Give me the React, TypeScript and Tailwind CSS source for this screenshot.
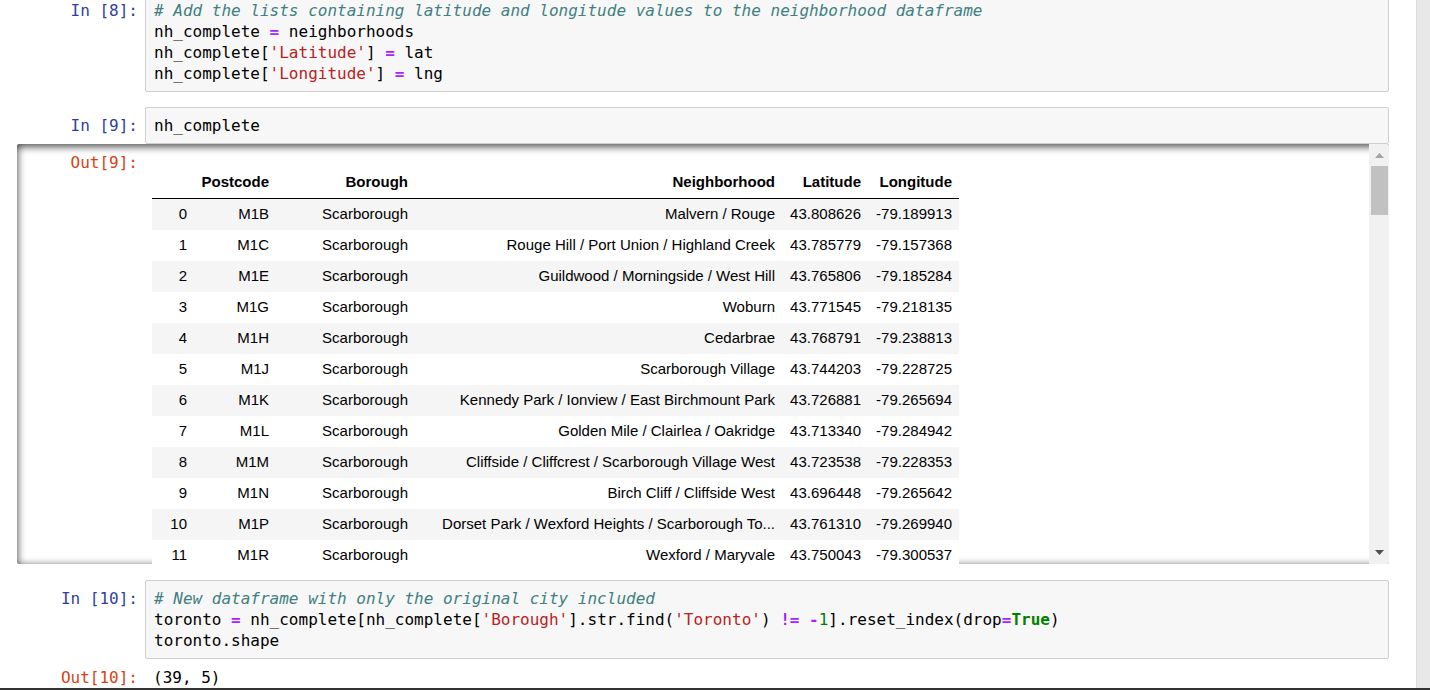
import React from 'react';

const mono = { fontFamily: '"DejaVu Sans Mono", "Liberation Mono", monospace' };

const rows: [string, string, string, string, string, string][] = [
    ['0', 'M1B', 'Scarborough', 'Malvern / Rouge', '43.808626', '-79.189913'],
    ['1', 'M1C', 'Scarborough', 'Rouge Hill / Port Union / Highland Creek', '43.785779', '-79.157368'],
    ['2', 'M1E', 'Scarborough', 'Guildwood / Morningside / West Hill', '43.765806', '-79.185284'],
    ['3', 'M1G', 'Scarborough', 'Woburn', '43.771545', '-79.218135'],
    ['4', 'M1H', 'Scarborough', 'Cedarbrae', '43.768791', '-79.238813'],
    ['5', 'M1J', 'Scarborough', 'Scarborough Village', '43.744203', '-79.228725'],
    ['6', 'M1K', 'Scarborough', 'Kennedy Park / Ionview / East Birchmount Park', '43.726881', '-79.265694'],
    ['7', 'M1L', 'Scarborough', 'Golden Mile / Clairlea / Oakridge', '43.713340', '-79.284942'],
    ['8', 'M1M', 'Scarborough', 'Cliffside / Cliffcrest / Scarborough Village West', '43.723538', '-79.228353'],
    ['9', 'M1N', 'Scarborough', 'Birch Cliff / Cliffside West', '43.696448', '-79.265642'],
    ['10', 'M1P', 'Scarborough', 'Dorset Park / Wexford Heights / Scarborough To...', '43.761310', '-79.269940'],
    ['11', 'M1R', 'Scarborough', 'Wexford / Maryvale', '43.750043', '-79.300537'],
];

const Op = ({ children }: { children: React.ReactNode }) => (
    <span className="font-bold text-[#aa22ff]">{children}</span>
);
const Str = ({ children }: { children: React.ReactNode }) => (
    <span className="text-[#ba2121]">{children}</span>
);
const Cmt = ({ children }: { children: React.ReactNode }) => (
    <span className="italic text-[#408080]">{children}</span>
);

const Prompt = ({ label, out = false }: { label: string; out?: boolean }) => (
    <div
        className={`w-[128px] shrink-0 pr-[7px] pt-[8px] text-right text-[16px] leading-[21px] whitespace-pre ${out ? 'text-[#d84315]' : 'text-[#303f9f]'}`}
        style={mono}
    >
        {label}
    </div>
);

const CodeCell = ({ label, children }: { label: string; children: React.ReactNode }) => (
    <div className="flex">
        <Prompt label={label} />
        <div
            className="flex-1 rounded-[2px] border border-[#cfcfcf] bg-[#f7f7f7] px-[8px] py-[7px] text-[16px] leading-[21px] text-black whitespace-pre"
            style={mono}
        >
            {children}
        </div>
    </div>
);

const Triangle = ({ up, color }: { up: boolean; color: string }) => (
    <svg width="9" height="5" viewBox="0 0 9 5">
        <polygon points={up ? '0,5 9,5 4.5,0' : '0,0 9,0 4.5,5'} fill={color} />
    </svg>
);

export default function App() {
    return (
        <div className="flex h-[690px] w-[1430px] flex-col overflow-hidden bg-white">
            <div className="flex min-h-0 flex-1">
                <div className="flex-1 overflow-hidden pl-[17px] pr-[27px]">
                    <div className="-mt-[8px] flex flex-col">
                        <CodeCell label="In [8]:">
                            <div><Cmt># Add the lists containing latitude and longitude values to the neighborhood dataframe</Cmt></div>
                            <div>nh_complete <Op>=</Op> neighborhoods</div>
                            <div>nh_complete[<Str>'Latitude'</Str>] <Op>=</Op> lat</div>
                            <div>nh_complete[<Str>'Longitude'</Str>] <Op>=</Op> lng</div>
                        </CodeCell>

                        <div className="mt-[15px]">
                            <CodeCell label="In [9]:">
                                <div>nh_complete</div>
                            </CodeCell>
                        </div>

                        {/* scrolled output area */}
                        <div className="flex h-[420px] overflow-hidden rounded-[2px] shadow-[inset_0_2px_8px_rgba(0,0,0,0.8)]">
                            <Prompt label="Out[9]:" out />
                            <div className="min-w-0 flex-1 overflow-hidden pl-[7px] pt-[23px]">
                                <table
                                    className="w-[807px] table-fixed border-separate border-spacing-0 text-[15px] text-black"
                                    style={{ fontFamily: '"Liberation Sans", Arial, sans-serif' }}
                                >
                                    <colgroup>
                                        <col className="w-[42px]" />
                                        <col className="w-[82px]" />
                                        <col className="w-[139px]" />
                                        <col className="w-[367px]" />
                                        <col className="w-[86px]" />
                                        <col className="w-[91px]" />
                                    </colgroup>
                                    <thead>
                                        <tr className="h-[32px]">
                                            <th className="border-b border-black px-[7px]"></th>
                                            <th className="border-b border-black px-[7px] text-right font-bold">Postcode</th>
                                            <th className="border-b border-black px-[7px] text-right font-bold">Borough</th>
                                            <th className="border-b border-black px-[7px] text-right font-bold">Neighborhood</th>
                                            <th className="border-b border-black px-[7px] text-right font-bold">Latitude</th>
                                            <th className="border-b border-black px-[7px] text-right font-bold">Longitude</th>
                                        </tr>
                                    </thead>
                                    <tbody>
                                        {rows.map((r, i) => (
                                            <tr key={r[0]} className={`h-[31px] ${i % 2 === 0 ? 'bg-[#f5f5f5]' : 'bg-white'}`}>
                                                {r.map((c, j) => (
                                                    <td key={j} className="overflow-hidden whitespace-nowrap px-[7px] text-right align-middle">
                                                        {c}
                                                    </td>
                                                ))}
                                            </tr>
                                        ))}
                                    </tbody>
                                </table>
                            </div>
                            {/* fake scrollbar */}
                            <div className="flex w-[20px] shrink-0 flex-col bg-[#f1f1f1]">
                                <div className="flex h-[20px] items-center justify-center pt-[3px]">
                                    <Triangle up color="#a3a3a3" />
                                </div>
                                <div className="ml-[2px] mr-[1px] mt-[2px] h-[49px] bg-[#c1c1c1]" />
                                <div className="flex-1" />
                                <div className="flex h-[20px] items-center justify-center pb-[3px]">
                                    <Triangle up={false} color="#505050" />
                                </div>
                            </div>
                        </div>

                        <div className="mt-[16px]">
                            <CodeCell label="In [10]:">
                                <div><Cmt># New dataframe with only the original city included</Cmt></div>
                                <div>
                                    toronto <Op>=</Op> nh_complete[nh_complete[<Str>'Borough'</Str>].str.find(<Str>'Toronto'</Str>) <Op>!=</Op> <Op>-</Op><span className="text-[#008000]">1</span>].reset_index(drop<Op>=</Op><span className="font-bold text-[#008000]">True</span>)
                                </div>
                                <div>toronto.shape</div>
                            </CodeCell>
                        </div>

                        <div className="mt-[8px] flex">
                            <div
                                className="w-[128px] shrink-0 pr-[7px] text-right text-[16px] leading-[21px] text-[#d84315] whitespace-pre"
                                style={mono}
                            >
                                Out[10]:
                            </div>
                            <div className="pl-[8px] text-[16px] leading-[21px] text-black whitespace-pre" style={mono}>
                                (39, 5)
                            </div>
                        </div>
                    </div>
                </div>
                {/* page scrollbar track */}
                <div className="w-[14px] shrink-0 border-l border-[#dcdcdc] bg-[#e8e8e8]" />
            </div>
            <div className="h-[2px] shrink-0 bg-[#333333]" />
        </div>
    );
}
